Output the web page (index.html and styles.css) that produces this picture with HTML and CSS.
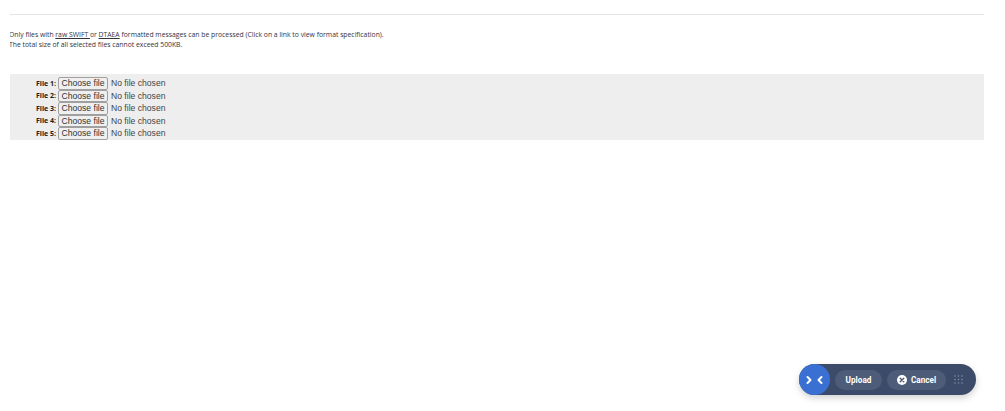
FILE: index.html
```html
<!DOCTYPE html>
<html lang="en">
<head>
<meta charset="utf-8">
<title>Upload files</title>
<link rel="stylesheet" href="styles.css">
</head>
<body>
<main class="page">
  <hr class="rule">
  <div class="notes">
    <p>Only files with <a href="#">raw SWIFT </a>or <a href="#">DTAEA</a> formatted messages can be processed (Click on a link to view format specification).</p>
    <p>The total size of all selected files cannot exceed 500KB.</p>
  </div>
  <form class="files">
    <div class="file-row"><span class="file-label">File 1:</span><button class="file-button" type="button">Choose file</button><span class="file-status">No file chosen</span></div>
    <div class="file-row"><span class="file-label">File 2:</span><button class="file-button" type="button">Choose file</button><span class="file-status">No file chosen</span></div>
    <div class="file-row"><span class="file-label">File 3:</span><button class="file-button" type="button">Choose file</button><span class="file-status">No file chosen</span></div>
    <div class="file-row"><span class="file-label">File 4:</span><button class="file-button" type="button">Choose file</button><span class="file-status">No file chosen</span></div>
    <div class="file-row"><span class="file-label">File 5:</span><button class="file-button" type="button">Choose file</button><span class="file-status">No file chosen</span></div>
  </form>
</main>
<div class="action-bar">
  <button class="toggle" type="button" aria-label="Collapse">
    <svg width="17" height="10" viewBox="0 0 17 10" fill="none" stroke="#fff" stroke-width="2" stroke-linecap="round" stroke-linejoin="round"><path d="M1.5 2 4.5 5 1.5 8"/><path d="M15.5 2 12.5 5l3 3"/></svg>
  </button>
  <button class="pill pill-upload" type="button">Upload</button>
  <button class="pill pill-cancel" type="button">
    <svg width="10" height="10" viewBox="0 0 10 10"><circle cx="5" cy="5" r="5" fill="#fff"/><path d="M3.2 3.2l3.6 3.6M6.8 3.2 3.2 6.8" stroke="#47566f" stroke-width="1.3" stroke-linecap="round"/></svg>
    Cancel
  </button>
  <svg class="grip" width="9" height="9" viewBox="0 0 9 9" fill="#7f8ba0"><circle cx="1" cy="1" r=".8"/><circle cx="4.5" cy="1" r=".8"/><circle cx="8" cy="1" r=".8"/><circle cx="1" cy="4.5" r=".8"/><circle cx="4.5" cy="4.5" r=".8"/><circle cx="8" cy="4.5" r=".8"/><circle cx="1" cy="8" r=".8"/><circle cx="4.5" cy="8" r=".8"/><circle cx="8" cy="8" r=".8"/></svg>
</div>
</body>
</html>
```
FILE: styles.css
```css
html, body {
  margin: 0;
  background: #fff;
}

body {
  height: 411px;
  overflow: hidden;
  font-family: "Open Sans", sans-serif;
}

.page {
  padding: 14px 21px 0 10px;
}

.rule {
  margin: 0;
  border: 0;
  border-top: 1px solid #e3e3e3;
}

.notes {
  margin-top: 15px;
  overflow: hidden;
  font-size: 6.82px;
  line-height: 9.5px;
  color: #33333f;
}

.notes p {
  margin: 0;
  text-indent: -1px;
}

.notes a {
  color: #33333f;
  text-decoration: underline;
}

.files {
  margin-top: 25px;
  padding: 3px 0 0.5px;
  background: #eee;
}

.file-row {
  display: flex;
  align-items: center;
  height: 12.5px;
}

.file-label {
  width: 46px;
  margin-right: 2px;
  text-align: right;
  font-size: 7px;
  font-weight: 700;
  color: #222;
}

.file-button {
  box-sizing: border-box;
  width: 50px;
  height: 12.5px;
  padding: 0;
  border: 1px solid #a0a0a0;
  border-radius: 2px;
  background: #efefef;
  color: #333;
  font-family: "Liberation Sans", Arial, sans-serif;
  font-size: 8.6px;
}

.file-status {
  margin-left: 3px;
  font-family: "Liberation Sans", Arial, sans-serif;
  font-size: 8.6px;
  color: #444;
}

.action-bar {
  position: absolute;
  left: 799px;
  top: 364px;
  width: 177px;
  height: 31px;
  display: flex;
  align-items: center;
  border-radius: 16px;
  background: #3b4b69;
  box-shadow: 0 3px 7px rgba(0, 0, 0, 0.18);
}

.toggle {
  flex: none;
  width: 31px;
  height: 31px;
  padding: 0;
  border: 0;
  border-radius: 50%;
  background: #3a70d2;
  display: flex;
  align-items: center;
  justify-content: center;
}

.pill {
  height: 20px;
  padding: 0;
  border: 0;
  border-radius: 10px;
  background: #4d5c78;
  color: #fff;
  font-family: "Roboto", sans-serif;
  font-size: 8.2px;
  font-weight: 700;
  display: flex;
  align-items: center;
  justify-content: center;
  gap: 4px;
}

.pill-upload {
  width: 47px;
  margin-left: 5px;
}

.pill-cancel {
  width: 59px;
  margin-left: 5px;
}

.grip {
  margin-left: 8px;
}
```
